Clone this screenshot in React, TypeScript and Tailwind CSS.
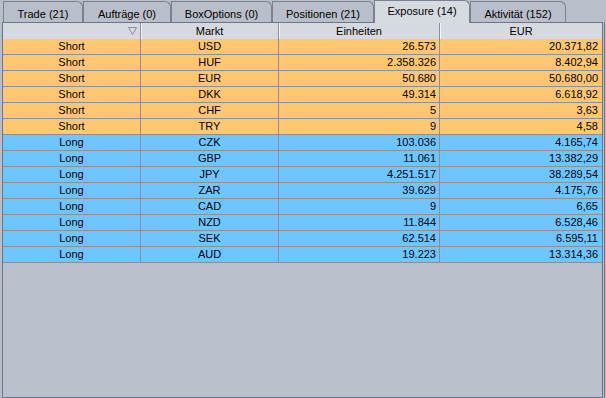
import React from "react";

type Row = { side: string; markt: string; units: string; eur: string };

const rows: Row[] = [
  { side: "Short", markt: "USD", units: "26.573", eur: "20.371,82" },
  { side: "Short", markt: "HUF", units: "2.358.326", eur: "8.402,94" },
  { side: "Short", markt: "EUR", units: "50.680", eur: "50.680,00" },
  { side: "Short", markt: "DKK", units: "49.314", eur: "6.618,92" },
  { side: "Short", markt: "CHF", units: "5", eur: "3,63" },
  { side: "Short", markt: "TRY", units: "9", eur: "4,58" },
  { side: "Long", markt: "CZK", units: "103.036", eur: "4.165,74" },
  { side: "Long", markt: "GBP", units: "11.061", eur: "13.382,29" },
  { side: "Long", markt: "JPY", units: "4.251.517", eur: "38.289,54" },
  { side: "Long", markt: "ZAR", units: "39.629", eur: "4.175,76" },
  { side: "Long", markt: "CAD", units: "9", eur: "6,65" },
  { side: "Long", markt: "NZD", units: "11.844", eur: "6.528,46" },
  { side: "Long", markt: "SEK", units: "62.514", eur: "6.595,11" },
  { side: "Long", markt: "AUD", units: "19.223", eur: "13.314,36" },
];

const tabs = [
  { label: "Trade (21)", w: "w-[80px]", sel: false },
  { label: "Aufträge (0)", w: "w-[88px]", sel: false },
  { label: "BoxOptions (0)", w: "w-[101px]", sel: false },
  { label: "Positionen (21)", w: "w-[102px]", sel: false },
  { label: "Exposure (14)", w: "w-[96px]", sel: true },
  { label: "Aktivität (152)", w: "w-[96px]", sel: false },
];

export default function App() {
  return (
    <div
      className="relative w-[606px] h-[398px] bg-[#b9bfca] overflow-hidden text-[11px] text-black leading-none"
      style={{ fontFamily: '"Liberation Sans", Arial, sans-serif' }}
    >
      {/* tab strip */}
      <div className="flex h-[22px] pl-[3px] items-end">
        {tabs.map((t) =>
          t.sel ? (
            <div
              key={t.label}
              className={`${t.w} h-[23px] -mb-px z-10 bg-[#d6dae1] border border-b-0 border-[#7a8292] rounded-tr-[6px] flex items-start justify-center pt-[5px]`}
            >
              {t.label}
            </div>
          ) : (
            <div
              key={t.label}
              className={`${t.w} h-[21px] bg-[#b9bfca] border border-b-0 border-[#7a8292] rounded-tr-[6px] flex items-start justify-center pt-[7px]`}
            >
              {t.label}
            </div>
          )
        )}
      </div>

      {/* panel */}
      <div className="flex h-[376px]">
        <div className="ml-[2px] w-[601px] h-[376px] border border-[#6d7585] bg-[#bbc1cc] flex flex-col">
          {/* header */}
          <div className="flex h-[16px] bg-[#d5d9e0]">
            <div className="w-[138px] border-r border-[#8a909b] flex items-center justify-end pr-[3px]">
              <svg width="9" height="8" viewBox="0 0 9 8">
                <path d="M0.5 0.5 L8.5 0.5 L4.5 7.5 Z" fill="none" stroke="#8a8f99" strokeWidth="1" />
              </svg>
            </div>
            <div className="w-[138px] border-r border-[#8a909b] shadow-[inset_1px_0_0_#f2f4f7] flex items-center justify-center">
              Markt
            </div>
            <div className="w-[161px] border-r border-[#8a909b] shadow-[inset_1px_0_0_#f2f4f7] flex items-center justify-center">
              Einheiten
            </div>
            <div className="w-[162px] shadow-[inset_1px_0_0_#f2f4f7] flex items-center justify-center">
              EUR
            </div>
          </div>
          {/* rows */}
          {rows.map((r) => (
            <div
              key={r.markt}
              className={`flex h-[16px] border-b border-[#8c8f96] ${
                r.side === "Short" ? "bg-[#ffc870]" : "bg-[#6fc6ff]"
              }`}
            >
              <div className="w-[138px] border-r border-[#8c8f96] flex items-center justify-center">
                {r.side}
              </div>
              <div className="w-[138px] border-r border-[#8c8f96] flex items-center justify-center">
                {r.markt}
              </div>
              <div className="w-[161px] border-r border-[#8c8f96] flex items-center justify-end pr-[3px]">
                {r.units}
              </div>
              <div className="w-[162px] flex items-center justify-end pr-[4px]">{r.eur}</div>
            </div>
          ))}
        </div>
        <div className="ml-[1px] w-px h-full bg-[#6d7585]" />
      </div>
    </div>
  );
}
